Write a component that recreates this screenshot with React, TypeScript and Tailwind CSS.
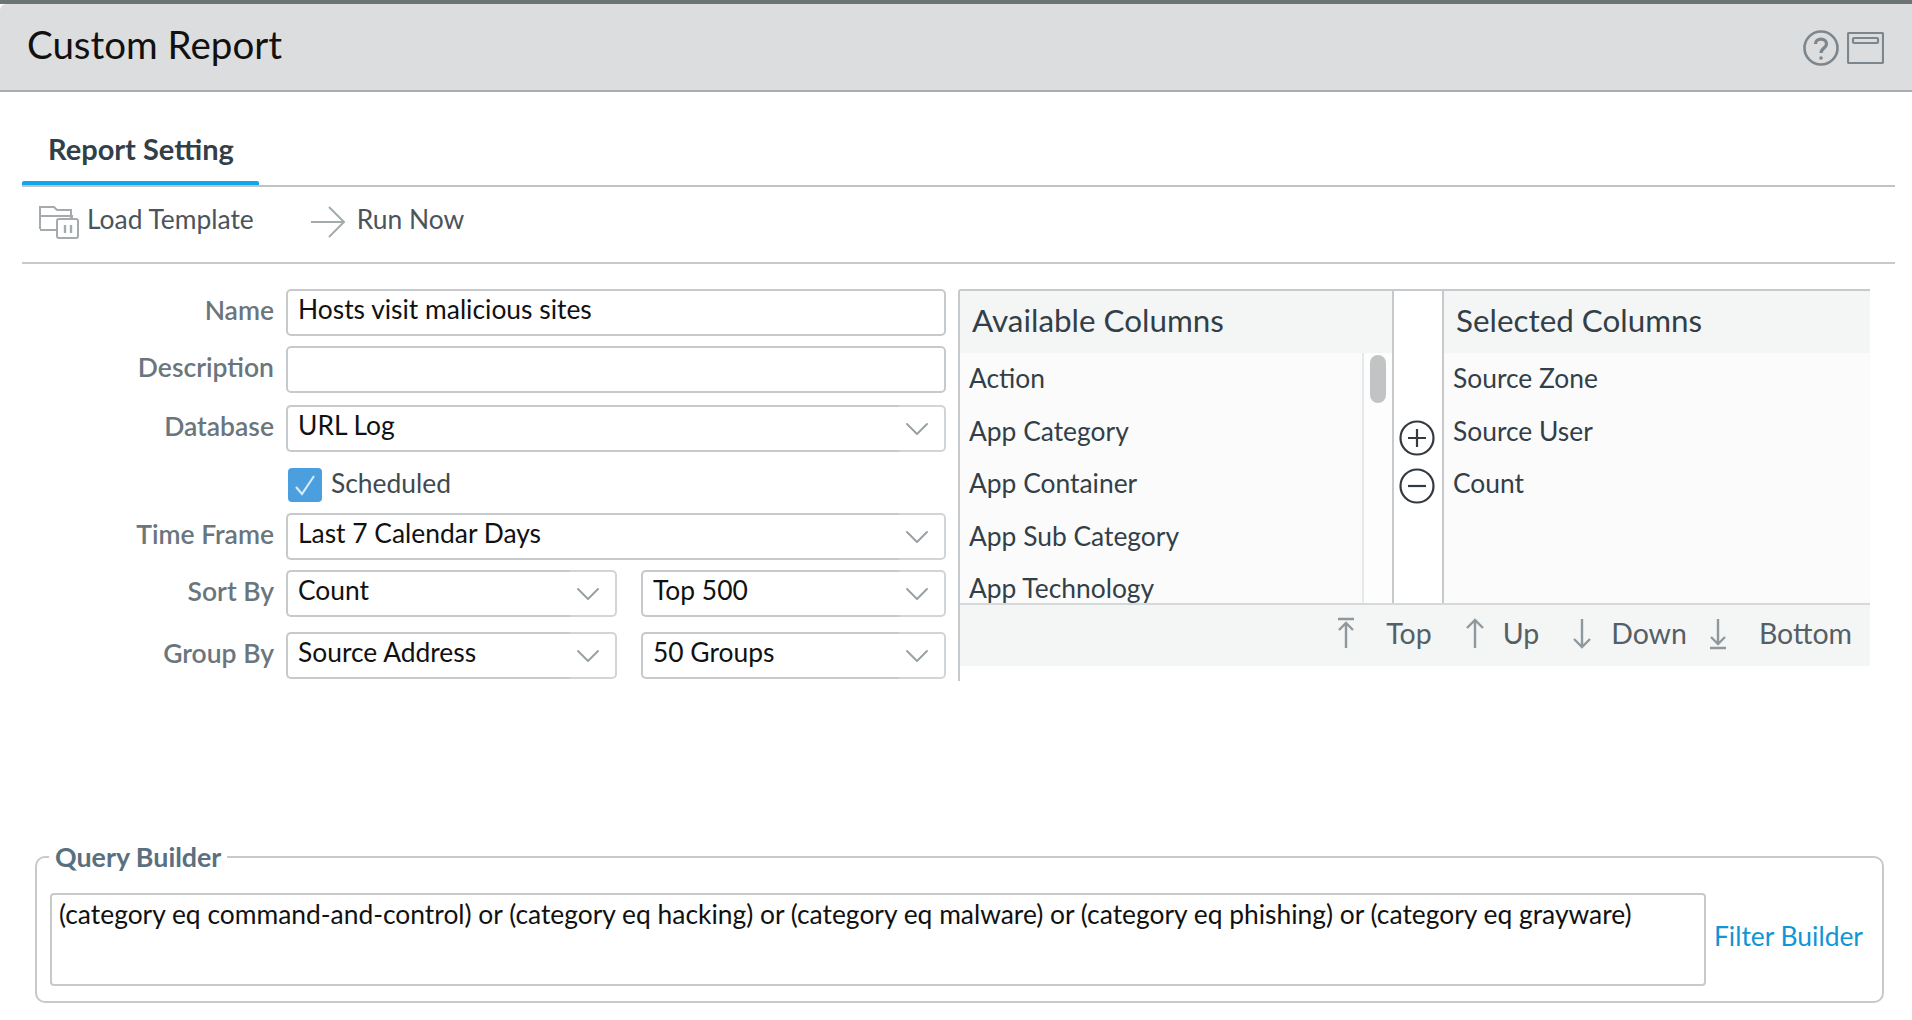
import React from "react";

const Chevron = () => (
  <svg width="24" height="14" viewBox="0 0 24 14" fill="none" stroke="#9aa2a6" strokeWidth="2" strokeLinecap="round" strokeLinejoin="round">
    <path d="M2 2 L12 12 L22 2" />
  </svg>
);

function Select({ value, className }: { value: string; className: string }) {
  return (
    <div className={`flex h-[47px] ${className}`}>
      <div className="flex-1 min-w-0 border-y-2 border-l-2 border-[#c6cacd] rounded-l-[5px] bg-white pl-[10px] text-[26.4px] leading-[36px] text-[#111] whitespace-nowrap overflow-hidden">
        {value}
      </div>
      <div className="w-[47px] flex items-center justify-center border-y-2 border-r-2 border-[#d2d5d7] rounded-r-[5px] shrink-0 pr-[10px]">
        <Chevron />
      </div>
    </div>
  );
}

function Label({ text }: { text: string }) {
  return (
    <div className="w-[252px] shrink-0 mr-[12px] text-right text-[26.5px] font-semibold text-[#6b757c] leading-[42px] whitespace-nowrap">
      {text}
    </div>
  );
}

function Arrow({ kind }: { kind: "top" | "up" | "down" | "bottom" }) {
  const d = {
    top: "M2 2 H18 M10 6 V31 M3 13 L10 6 L17 13",
    up: "M10 3 V31 M2 11 L10 3 L18 11",
    down: "M10 2 V30 M2 22 L10 30 L18 22",
    bottom: "M2 31 H18 M10 2 V27 M3 20 L10 27 L17 20",
  }[kind];
  return (
    <svg width="20" height="33" viewBox="0 0 20 33" fill="none" stroke="#8f999d" strokeWidth="2.4">
      <path d={d} />
    </svg>
  );
}

function RoundIcon({ plus }: { plus?: boolean }) {
  return (
    <svg width="36" height="36" viewBox="0 0 36 36" fill="none" stroke="#333a40" strokeWidth="2.2">
      <circle cx="18" cy="18" r="16.5" />
      <path d={plus ? "M9 18 H27 M18 9 V27" : "M9 18 H27"} />
    </svg>
  );
}

export default function App() {
  return (
    <div className="w-[1912px] h-[1020px] overflow-hidden bg-white font-['Lato',sans-serif] flex flex-col">
      <div className="h-[4px] bg-[#6c7476] shrink-0" />
      <header className="h-[88px] shrink-0 bg-[#dcdddf] border-b-2 border-[#a9adaf] rounded-tl-[6px] flex items-center justify-between pl-[27px] pr-[28px]">
        <h1 className="text-[38.5px] text-[#111] leading-none -mt-[5px]">Custom Report</h1>
        <div className="flex items-center gap-[8px] mt-[2px]">
          <svg width="36" height="36" viewBox="0 0 36 36" fill="none" stroke="#7d868c" strokeWidth="2.6">
            <circle cx="18" cy="18" r="16.5" />
            <path d="M12.5 14 C12.5 7.5 23.5 7.5 23.5 14 C23.5 18 18 18 18 23" strokeWidth="3.2" />
            <circle cx="18" cy="28" r="1.8" fill="#7d868c" stroke="none" />
          </svg>
          <svg width="37" height="32" viewBox="0 0 37 32" fill="none" stroke="#7d868c" strokeWidth="2.2">
            <rect x="1" y="1" width="35" height="30" rx="1" />
            <rect x="6" y="6" width="25" height="5" rx="1" />
          </svg>
        </div>
      </header>

      <div className="ml-[22px] mr-[17px] h-[95px] shrink-0 border-b-2 border-[#c0c3c5] flex items-end">
        <div className="relative w-[237px] h-[73px] pl-[26px] text-[29px] font-bold text-[#333f48] leading-[69px] -mb-[2px]">
          Report Setting
          <div className="absolute left-0 right-0 bottom-[2px] h-[4px] rounded-t-[2px] bg-[#12a5ea]" />
        </div>
      </div>

      <div className="ml-[22px] mr-[17px] h-[77px] shrink-0 border-b-2 border-[#c6cacd] flex items-center text-[26.4px] text-[#4a545b] pb-[10px]">
        <svg className="ml-[17px] mt-[5px]" width="40" height="34" viewBox="0 0 40 34" fill="none" stroke="#a3abae" strokeWidth="2">
          <path d="M1 24 V2 H15 L18 5 H32 V13" />
          <path d="M1 24 L1 11 H33 V14" />
          <path d="M1 25 H17" />
          <rect x="18" y="14" width="21" height="19" rx="2" />
          <path d="M26 20 V28 M32 20 V28" strokeWidth="2.4" />
        </svg>
        <span className="ml-[8px]">Load Template</span>
        <svg className="ml-[56px] mt-[5px]" width="36" height="32" viewBox="0 0 36 32" fill="none" stroke="#a3abae" strokeWidth="2">
          <path d="M1 16 H34 M19 1 L34 16 L19 31" />
        </svg>
        <span className="ml-[11px]">Run Now</span>
      </div>

      <main className="flex pl-[22px] pt-[25px] shrink-0">
        <form className="w-[924px] shrink-0">
          <div className="flex">
            <Label text="Name" />
            <div className="w-[660px] h-[47px] border-2 border-[#c6cacd] rounded-[5px] pl-[10px] text-[26.4px] leading-[36px] text-[#111]">
              Hosts visit malicious sites
            </div>
          </div>
          <div className="flex mt-[10px]">
            <Label text="Description" />
            <div className="w-[660px] h-[47px] border-2 border-[#c6cacd] rounded-[5px]" />
          </div>
          <div className="flex mt-[12px]">
            <Label text="Database" />
            <Select value="URL Log" className="w-[660px]" />
          </div>
          <div className="flex items-center mt-[16px] h-[34px] pl-[266px]">
            <div className="w-[34px] h-[34px] rounded-[4px] bg-[#4b9fdf] flex items-center justify-center">
              <svg width="24" height="24" viewBox="0 0 24 24" fill="none" stroke="#d8ebf8" strokeWidth="2.2">
                <path d="M3 14 L9 21 L21 3" />
              </svg>
            </div>
            <span className="ml-[9px] text-[26.4px] text-[#3e4950] -mt-[2px]">Scheduled</span>
          </div>
          <div className="flex mt-[11px]">
            <Label text="Time Frame" />
            <Select value="Last 7 Calendar Days" className="w-[660px]" />
          </div>
          <div className="flex mt-[10px]">
            <Label text="Sort By" />
            <div className="w-[660px] flex justify-between">
              <Select value="Count" className="w-[331px]" />
              <Select value="Top 500" className="w-[305px]" />
            </div>
          </div>
          <div className="flex mt-[15px]">
            <Label text="Group By" />
            <div className="w-[660px] flex justify-between">
              <Select value="Source Address" className="w-[331px]" />
              <Select value="50 Groups" className="w-[305px]" />
            </div>
          </div>
        </form>

        <section className="ml-[12px] w-[912px] h-[392px] shrink-0 border-l-2 border-t-2 border-[#c6cacd] rounded-tl-[3px] self-start">
          <div className="flex h-[312px]">
            <div className="w-[432px] shrink-0 flex flex-col">
              <div className="h-[62px] shrink-0 bg-[#f4f6f6] pl-[12px] text-[31.4px] text-[#333f48] leading-[58px]">Available Columns</div>
              <div className="flex-1 flex bg-[#fbfbfb] min-h-0 overflow-hidden">
                <ul className="flex-1 pl-[9px] pt-[2px] text-[26.4px] text-[#333f48]">
                  {["Action", "App Category", "App Container", "App Sub Category", "App Technology"].map((t) => (
                    <li key={t} className="h-[52.5px] leading-[46px] whitespace-nowrap">{t}</li>
                  ))}
                </ul>
                <div className="w-[30px] shrink-0 border-l-2 border-[#e6e8e9] bg-[#fdfdfd] pt-[2px] pl-[6px]">
                  <div className="w-[16px] h-[48px] rounded-full bg-[#c2c3c4]" />
                </div>
              </div>
            </div>
            <div className="w-[52px] shrink-0 border-x-2 border-[#c6cacd] flex flex-col items-center pt-[129px] pr-[2px] gap-[12px]">
              <RoundIcon plus />
              <RoundIcon />
            </div>
            <div className="flex-1 flex flex-col min-w-0">
              <div className="h-[62px] shrink-0 bg-[#f4f6f6] pl-[12px] text-[31.4px] text-[#333f48] leading-[58px]">Selected Columns</div>
              <ul className="flex-1 bg-[#fbfbfb] pl-[9px] pt-[2px] text-[26.4px] text-[#333f48]">
                {["Source Zone", "Source User", "Count"].map((t) => (
                  <li key={t} className="h-[52.5px] leading-[46px]">{t}</li>
                ))}
              </ul>
            </div>
          </div>
          <div className="h-[63px] border-t-2 border-[#d6d9da] bg-[#f4f6f6] flex items-center justify-end pr-[18px] pb-[5px] text-[28.5px] text-[#555f66]">
            <Arrow kind="top" />
            <span className="ml-[30px]">Top</span>
            <span className="ml-[33px]"><Arrow kind="up" /></span>
            <span className="ml-[18px]">Up</span>
            <span className="ml-[33px]"><Arrow kind="down" /></span>
            <span className="ml-[19px]">Down</span>
            <span className="ml-[21px]"><Arrow kind="bottom" /></span>
            <span className="ml-[31px]">Bottom</span>
          </div>
        </section>
      </main>

      <fieldset className="ml-[35px] mr-[32px] mt-[163px] h-[159px] shrink-0 border-2 border-[#c6cacd] rounded-[10px] pl-[13px] pr-[19px] pb-[15px] flex">
        <legend className="-ml-[1px] px-[6px] text-[26.8px] font-bold text-[#5a7080] leading-[26px]">Query Builder</legend>
        <div className="flex items-center w-full mt-[23px] self-start">
          <div className="w-[1656px] h-[93px] shrink-0 border-2 border-[#c6cacd] rounded-[4px] pl-[7px] pt-[1px] text-[26.4px] text-[#111] leading-[36px] whitespace-nowrap">
            (category eq command-and-control) or (category eq hacking) or (category eq malware) or (category eq phishing) or (category eq grayware)
          </div>
          <a className="ml-[8px] mb-[6px] text-[26.4px] text-[#1095d5] whitespace-nowrap">Filter Builder</a>
        </div>
      </fieldset>
    </div>
  );
}
